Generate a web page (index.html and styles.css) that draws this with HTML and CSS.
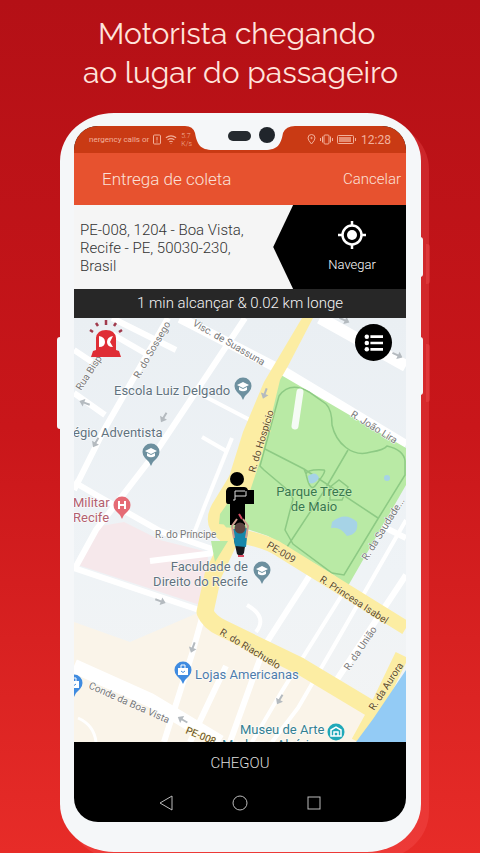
FILE: index.html
```html
<!DOCTYPE html>
<html lang="pt-BR">
<head>
    <meta charset="UTF-8">
    <meta name="viewport" content="width=device-width, initial-scale=1.0">
    <title>Motorista chegando</title>
    <link rel="stylesheet" href="styles.css">
</head>
<body>
    <h1>Motorista chegando&nbsp;<br>ao lugar do passageiro</h1>

    <main class="phone">
        <span class="side-key key-left"></span>
        <span class="side-key key-power"></span>
        <span class="side-key key-volume"></span>

        <div class="screen">
            <svg class="notch" viewBox="0 0 110 27" aria-hidden="true">
                <path fill="#f5f7f9" d="M0 0Q8 0 10 7C12 18 15 24 28 24H80C93 24 96 18 98 7Q101 0 110 0Z"/>
                <rect x="43" y="5" width="23" height="10" rx="5" fill="#252a2f"/>
                <circle cx="82" cy="9" r="8" fill="#20252b"/>
            </svg>

            <div class="status-bar">
                <div class="status-left">
                    <span class="carrier">nergency calls or</span>
                    <svg width="8" height="11" viewBox="0 0 8 11" fill="none" stroke="currentColor">
                        <rect x=".5" y="1" width="7" height="9" rx="1"/>
                        <path d="M4 3v3.5M4 7.5v1"/>
                    </svg>
                    <svg width="12" height="11" viewBox="0 0 14 11" fill="none" stroke="currentColor" stroke-width="1.2">
                        <path d="M1 3.500Q7-1 13 3.500M3 6Q7 3 11 6M5 8.300Q7 6.800 9 8.300M7 9.500v1"/>
                    </svg>
                    <span class="speed">5.7<br>K/s</span>
                </div>
                <div class="status-right">
                    <svg width="9" height="11" viewBox="0 0 9 11" fill="none" stroke="currentColor">
                        <path d="M4.500 10Q1 6 1 4a3.500 3.500 0 0 1 7 0Q8 6 4.500 10z"/>
                        <circle cx="4.500" cy="4" r=".7"/>
                    </svg>
                    <svg width="13" height="11" viewBox="0 0 13 11" fill="none" stroke="currentColor">
                        <rect x="4" y="1" width="5" height="9" rx="1"/>
                        <path d="M2.500 2.500v6M.5 4v3M10.500 2.500v6M12.500 4v3"/>
                    </svg>
                    <svg width="20" height="9" viewBox="0 0 20 9">
                        <rect x=".5" y=".5" width="16" height="8" rx="1" fill="none" stroke="currentColor"/>
                        <rect x="2" y="2" width="12" height="5" fill="currentColor" opacity=".7"/>
                        <path d="M18.500 3v3" stroke="currentColor"/>
                    </svg>
                    <span class="clock">12:28</span>
                </div>
            </div>

            <header class="app-bar">
                <h2>Entrega de coleta</h2>
                <button type="button">Cancelar</button>
            </header>

            <section class="pickup">
                <p class="address">PE-008, 1204 - Boa Vista, Recife - PE, 50030-230, Brasil</p>
                <button type="button" class="navigate">
                    <svg width="28" height="28" viewBox="0 0 28 28" fill="none" stroke="#fff" stroke-width="2.500">
                        <circle cx="14" cy="14" r="9.500"/>
                        <circle cx="14" cy="14" r="5" fill="#fff" stroke="none"/>
                        <path d="M14 0v5M14 23v5M0 14h5M23 14h5"/>
                    </svg>
                    Navegar
                </button>
            </section>

            <p class="eta">1 min alcançar &amp; 0.02 km longe</p>

            <section class="map">
                <svg class="map-canvas" viewBox="74 318 332 424" preserveAspectRatio="xMidYMid slice" role="img" aria-label="Mapa">
                    <defs>
                        <linearGradient id="ground" x1="0" y1="0" x2="0" y2="1">
                            <stop offset="0" stop-color="#eaeff3"/>
                            <stop offset=".6" stop-color="#eff3f6"/>
                            <stop offset="1" stop-color="#f3f4f4"/>
                        </linearGradient>
                        <g id="pin">
                            <path d="M0 13Q-2 8-6 5A8.500 8.500 0 1 1 6 5Q2 8 0 13z"/>
                        </g>
                        <g id="school">
                            <use href="#pin" fill="#6d909f"/>
                            <path fill="#fff" d="M0-5L6-2 0 1-6-2zM-4 0L0 2 4 0V3Q0 5.500-4 3z"/>
                        </g>
                        <path id="arrow" fill="#b4babf" d="M-5-1H1V-4L6 0 1 4V1H-5z"/>
                    </defs>

                    <rect x="74" y="318" width="332" height="424" fill="url(#ground)"/>
                    <!-- districts -->
                    <path fill="#faf4e9" d="M74 622L130 642 200 612 280 650 375 716V742H74z"/>
                    <path fill="#f6e8eb" d="M101 526L124 522 160 540 208 552 206 607 78 565z"/>

                    <!-- small streets -->
                    <g fill="none" stroke="#fff" stroke-width="6">
                        <path d="M74 350L92 362M105 415L74 393M168 318L104 430 74 490M245 318L156 452 96 530 74 570"/>
                        <path d="M74 482L98 496 160 531 215 550M74 568L202 611M112 334L150 356M176 350L112 318"/>
                        <path d="M180 318L285 372 406 445" stroke-width="10"/>
                        <path d="M320 318L406 366" stroke-width="12"/>
                        <path d="M232 438L205 505 193 536M250 420L202 395M228 452L202 437" stroke-width="4"/>
                        <path d="M150 561L214 553M202 618L192 654 164 742M310 575L265 645 230 742"/>
                        <path d="M345 590L282 691 252 742M406 520L334 646 298 708 272 742M247 605Q268 617 256 632" stroke-width="4"/>
                        <path d="M406 475L338 592M378 524L406 538M406 575L334 684M226 666L190 742"/>
                        <path d="M74 666L150 700 220 742" stroke-width="14"/>
                        <path d="M78 718Q94 725 96 742" stroke-width="3"/>
                    </g>

                    <!-- park -->
                    <path fill="#b9eaa5" d="M281 375L406 448V485L348 586Q342 584 335 576L268 536 238 526 220 536 219 516 236 496 250 450z"/>
                    <g fill="none" stroke="#8dca84" stroke-width="1.500">
                        <path d="M260 466L279 396Q290 381 309 392L326 404Q332 410 332 425C336 443 352 458 371 452Q384 450 387 446Q404 450 405 461L405 475 376 522 344 575 332 573 293 544 285 530 293 499 290 492 264 470z"/>
                        <path d="M263 448L304 469 378 518M348 450L324 491 287 547M306 474Q310 492 315 486 327 471 324 470 307 469 306 474M330 487L339 480 348 487 342 500 330 500zM304 469L306 474"/>
                    </g>
                    <path d="M300 392L295 426" stroke="#f5fbf5" stroke-width="7" stroke-linecap="round"/>
                    <g fill="#a6d3e6">
                        <path d="M308 476Q316 470 319 478 315 485 309 483z"/>
                        <path d="M332 522Q345 511 357 522 359 534 347 536 340 526 331 528z"/>
                        <circle cx="387" cy="478" r="3"/>
                    </g>

                    <!-- avenues -->
                    <path fill="#fceda3" d="M302 318H313L288 366 280 380 262 455 248 497 238 505 218 512 229 477 243 432 264 382z"/>
                    <g fill="none" stroke="#fceda3" stroke-width="14" stroke-linejoin="round">
                        <path d="M237 477L218 508Q210 523 223 534 262 538 280 550L406 628"/>
                        <path d="M232 535L213 575 205 612Q209 622 222 628L300 666 375 711" stroke-width="17"/>
                        <path d="M402 655L375 711 358 742"/>
                    </g>
                    <path fill="#b9eaa5" d="M220 514L237 490 240 526 219 524zM211 541L228 541 215 562z"/>
                    <path fill="#93cbf5" d="M406 670L373 719 356 742H406z"/>

                    <use href="#arrow" transform="translate(85 403) rotate(200)"/>
                    <use href="#arrow" transform="translate(164 417) rotate(120)"/>
                    <use href="#arrow" transform="translate(96 442) rotate(120)"/>
                    <use href="#arrow" transform="translate(265 393) rotate(110)"/>
                    <use href="#arrow" transform="translate(344 320) rotate(25)"/>
                    <use href="#arrow" transform="translate(397 355) rotate(25)"/>
                    <use href="#arrow" transform="translate(160 601) rotate(20)"/>
                    <use href="#arrow" transform="translate(193 647) rotate(110)"/>
                    <use href="#arrow" transform="translate(280 699) rotate(120)"/>
                    <use href="#arrow" transform="translate(183 720) rotate(210)"/>

                    <g class="street">
                        <text transform="translate(81 391) rotate(-57)">Rua Bispo</text>
                        <text transform="translate(139 379) rotate(-60)">R. do Sossego</text>
                        <text transform="translate(192 325) rotate(30)">Visc. de Suassuna</text>
                        <text transform="translate(350 416) rotate(32)">R. João Lira</text>
                        <text x="155" y="538">R. do Príncipe</text>
                        <text transform="translate(367 561) rotate(-58)">R. da Saudade...</text>
                        <text transform="translate(349 671) rotate(-56)">R. da União</text>
                        <text transform="translate(88 688) rotate(24)">Conde da Boa Vista</text>
                    </g>
                    <g class="street avenue">
                        <text transform="translate(255 473) rotate(-73)">R. do Hospício</text>
                        <text transform="translate(266 547) rotate(31)">PE-009</text>
                        <text transform="translate(319 581) rotate(33)">R. Princesa Isabel</text>
                        <text transform="translate(219 634) rotate(31)">R. do Riachuelo</text>
                        <text transform="translate(374 711) rotate(-57)">R. da Aurora</text>
                        <text transform="translate(185 733) rotate(22)">PE-008</text>
                    </g>

                    <g class="place">
                        <text x="114" y="395">Escola Luiz Delgado</text>
                        <text x="73" y="437">égio Adventista</text>
                        <text x="248" y="571" text-anchor="end">Faculdade de</text>
                        <text x="248" y="586" text-anchor="end">Direito do Recife</text>
                    </g>
                    <g class="place hospital">
                        <text x="73" y="507">Militar</text>
                        <text x="73" y="522">Recife</text>
                    </g>
                    <g class="place park">
                        <text x="314" y="496" text-anchor="middle">Parque Treze</text>
                        <text x="314" y="511" text-anchor="middle">de Maio</text>
                    </g>
                    <text class="place shop" x="195" y="679">Lojas Americanas</text>
                    <g class="place museum">
                        <text x="240" y="734">Museu de Arte</text>
                        <text x="222" y="749">Moderna Aloísio</text>
                    </g>

                    <use href="#school" transform="translate(243 387)"/>
                    <use href="#school" transform="translate(151 453)"/>
                    <use href="#school" transform="translate(262 571)"/>
                    <use href="#pin" fill="#e56b75" transform="translate(122 506)"/>
                    <path d="M119 501V509M125 501V509M119 505H125" stroke="#fff" stroke-width="2"/>
                    <g id="bag">
                        <use href="#pin" fill="#3f8be0" transform="translate(183 671)"/>
                        <path d="M178 668H188V675H178z" fill="#fff"/>
                        <path d="M181 668V665H185V668" fill="none" stroke="#fff"/>
                        <path d="M181 671Q183 674 185 671" fill="none" stroke="#3f8be0"/>
                    </g>
                    <use href="#bag" transform="translate(-109 13)"/>
                    <circle cx="336" cy="732" r="8.500" fill="#20a9b9"/>
                    <path d="M331 730L336 727 341 730V736H331zM334 736V732H338V736" fill="none" stroke="#fff" stroke-width="1.500"/>

                    <!-- siren -->
                    <g fill="#df2d35">
                        <path d="M96 350V338Q97 330 106 330T116 338V350L119 351 121 357H91L93 351z"/>
                        <path fill="#fff" d="M99 336Q105 337 105 342T99 347zM113 336Q107 337 107 342T113 347L110 342z"/>
                    </g>
                    <path d="M90 330l3 2M96 323l2 3M106 320v5M116 323l-2 3M122 330l-3 2" stroke="#a03a4c" stroke-width="2.500"/>

                    <!-- passenger and driver -->
                    <g>
                        <circle cx="237" cy="479" r="7"/>
                        <path d="M230 487H244Q247 487 248 490H254V504H245V525H230V504H228Q226 504 226 501V491Q227 487 230 487z"/>
                        <path d="M245 491H235V500H233M235 496H246V491" fill="none" stroke="#ddd"/>
                    </g>
                    <g>
                        <path fill="#17191d" d="M234 540H246L244 553 241 557 237 554z"/>
                        <path fill="#1687aa" d="M232 529L248 528 246 547 235 546z"/>
                        <path d="M234 538L232 526 237 519M246 538L248 526 243 519" fill="none" stroke="#cf9f91" stroke-width="2"/>
                        <circle cx="240" cy="528" r="5.500" fill="#5b4341"/>
                        <path d="M239 514L242 519M238 556L244 556" fill="none" stroke="#d84a61" stroke-width="2"/>
                    </g>
                </svg>
                <button type="button" class="list-button" aria-label="Lista">
                    <svg width="20" height="18" viewBox="0 0 22 20" stroke="#fff" stroke-width="3" fill="#fff">
                        <path d="M7 3H21M7 10H21M7 17H21"/>
                        <g stroke="none"><circle cx="3" cy="3" r="2.500"/><circle cx="3" cy="10" r="2.500"/><circle cx="3" cy="17" r="2.500"/></g>
                    </svg>
                </button>
            </section>

            <button type="button" class="arrived">CHEGOU</button>

            <nav class="system-nav">
                <button type="button" aria-label="Voltar">
                    <svg width="16" height="16" viewBox="0 0 16 16"><path d="M14 1V15L2 8z"/></svg>
                </button>
                <button type="button" aria-label="Início">
                    <svg width="16" height="16" viewBox="0 0 16 16"><circle cx="8" cy="8" r="7"/></svg>
                </button>
                <button type="button" aria-label="Recentes">
                    <svg width="16" height="16" viewBox="0 0 16 16"><rect x="2" y="2" width="12" height="12"/></svg>
                </button>
            </nav>
        </div>
    </main>
</body>
</html>
```

FILE: styles.css
```css
* {
    box-sizing: border-box;
    margin: 0;
    padding: 0;
}

body {
    min-height: 100vh;
    padding: 14px 59px 0 60px;
    background: linear-gradient(#b41016, #c9161a 50%, #e72c28);
    font-family: Roboto, sans-serif;
    font-weight: 300;
    overflow: hidden;
}

button {
    border: 0;
    background: none;
    color: inherit;
    font: inherit;
    cursor: pointer;
}

h1 {
    margin-bottom: 21px;
    color: #ffe4dc;
    font-family: Raleway, "Open Sans", sans-serif;
    font-size: 30px;
    font-weight: 400;
    line-height: 39px;
    text-align: center;
    white-space: nowrap;
}

.phone {
    position: relative;
    padding: 13px 15px 30px 14px;
    border-radius: 54px / 48px;
    background: #f5f7f9;
    box-shadow: 8px 8px 0 rgba(255, 100, 100, 0.25);
}

.side-key {
    position: absolute;
    width: 4px;
    background: #f5f7f9;
}

.key-left {
    top: 224px;
    left: -3px;
    height: 92px;
    border-radius: 3px 0 0 3px;
}

.key-power,
.key-volume {
    right: -2px;
    border-radius: 0 3px 3px 0;
    box-shadow: 7px 7px 0 rgba(255, 100, 100, 0.25);
}

.key-power {
    top: 124px;
    height: 40px;
}

.key-volume {
    top: 224px;
    height: 58px;
}

.screen {
    position: relative;
    overflow: hidden;
    border-radius: 24px;
    background: #000;
}

.notch {
    position: absolute;
    top: 0;
    left: 50%;
    width: 110px;
    height: 27px;
    transform: translateX(-50%);
}

.status-bar {
    display: flex;
    justify-content: space-between;
    align-items: center;
    height: 27px;
    padding: 0 15px;
    background: #c93a14;
    color: #f2b09b;
}

.status-left,
.status-right {
    display: flex;
    align-items: center;
    gap: 4px;
}

.carrier {
    font-size: 8px;
    font-weight: 400;
}

.speed {
    font-size: 7px;
    line-height: 8px;
}

.clock {
    font-size: 12px;
    font-weight: 400;
}

.app-bar {
    display: flex;
    justify-content: space-between;
    align-items: center;
    height: 52px;
    padding: 0 5px 0 28px;
    background: #e7522f;
    color: #fbe0d7;
    font-size: 15px;
}

.app-bar h2 {
    font-size: 17px;
    font-weight: 300;
}

.pickup {
    display: flex;
    height: 84px;
    background: #f5f5f5;
}

.address {
    flex: 1;
    align-self: center;
    padding: 2px 20px 0 6px;
    color: #333;
    font-size: 15px;
    line-height: 18px;
}

.navigate {
    display: flex;
    flex-direction: column;
    justify-content: center;
    align-items: center;
    gap: 8px;
    width: 40%;
    padding-left: 25px;
    background: #000;
    clip-path: polygon(0 50%, 15% 0, 100% 0, 100% 100%, 15% 100%);
    color: #fff;
    font-size: 13px;
    line-height: 16px;
}

.eta {
    background: #272727;
    color: #f5f5f5;
    font-size: 15px;
    line-height: 29px;
    text-align: center;
}

.map {
    position: relative;
}

.map-canvas {
    display: block;
    width: 100%;
}

.list-button {
    position: absolute;
    top: 6px;
    right: 14px;
    display: grid;
    place-items: center;
    width: 37px;
    height: 37px;
    border-radius: 50%;
    background: #000;
}

.street {
    fill: #777;
    stroke: #fff;
    stroke-width: 1px;
    paint-order: stroke;
    font-size: 10px;
    font-weight: 400;
}

.avenue {
    fill: #5f4c28;
    stroke: #fdf3c4;
}

.place {
    fill: #60727e;
    stroke: #fff;
    stroke-width: 1px;
    paint-order: stroke;
    font-size: 13px;
    font-weight: 400;
}

.hospital {
    fill: #b2606e;
}

.park {
    fill: #38784d;
    stroke: #c9efba;
}

.shop {
    fill: #4e7cab;
}

.museum {
    fill: #347f91;
}

.arrived {
    display: block;
    width: 100%;
    height: 42px;
    background: #000;
    color: #ddd;
    font-size: 15px;
}

.system-nav {
    display: flex;
    justify-content: center;
    gap: 58px;
    height: 38px;
    padding-top: 11px;
}

.system-nav button {
    width: 16px;
    height: 16px;
}

.system-nav svg {
    display: block;
    fill: none;
    stroke: #bbb;
}
```
